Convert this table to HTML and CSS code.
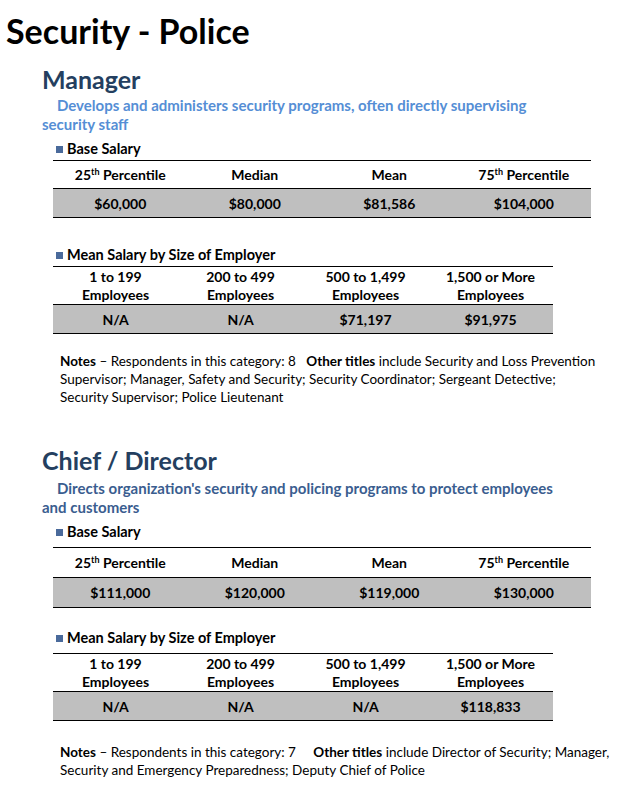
FILE: index.html
```html
<!DOCTYPE html>
<html>
<head>
<meta charset="utf-8">
<link rel="stylesheet" href="styles.css">
</head>
<body>
<h1 class="page-title">Security - Police</h1>

<section class="job">
  <h2 class="job-title">Manager</h2>
  <p class="job-desc light">Develops and administers security programs, often directly supervising security staff</p>
  <h3 class="sub"><span class="sq"></span>Base Salary</h3>
  <table class="tbl base">
    <tr class="hd"><th>25<sup>th</sup> Percentile</th><th>Median</th><th>Mean</th><th>75<sup>th</sup> Percentile</th></tr>
    <tr class="val"><td>$60,000</td><td>$80,000</td><td>$81,586</td><td>$104,000</td></tr>
  </table>
  <h3 class="sub sub2"><span class="sq"></span>Mean Salary by Size of Employer</h3>
  <table class="tbl size">
    <tr class="hd"><th>1 to 199<br>Employees</th><th>200 to 499<br>Employees</th><th>500 to 1,499<br>Employees</th><th>1,500 or More<br>Employees</th></tr>
    <tr class="val"><td>N/A</td><td>N/A</td><td>$71,197</td><td>$91,975</td></tr>
  </table>
  <p class="notes"><b>Notes</b> – Respondents in this category: 8&nbsp;&nbsp; <b>Other titles</b> include Security and Loss Prevention Supervisor; Manager, Safety and Security; Security Coordinator; Sergeant Detective; Security Supervisor; Police Lieutenant</p>
</section>

<section class="job job2">
  <h2 class="job-title">Chief / Director</h2>
  <p class="job-desc dark">Directs organization's security and policing programs to protect employees and customers</p>
  <h3 class="sub"><span class="sq"></span>Base Salary</h3>
  <table class="tbl base">
    <tr class="hd"><th>25<sup>th</sup> Percentile</th><th>Median</th><th>Mean</th><th>75<sup>th</sup> Percentile</th></tr>
    <tr class="val"><td>$111,000</td><td>$120,000</td><td>$119,000</td><td>$130,000</td></tr>
  </table>
  <h3 class="sub sub2"><span class="sq"></span>Mean Salary by Size of Employer</h3>
  <table class="tbl size">
    <tr class="hd"><th>1 to 199<br>Employees</th><th>200 to 499<br>Employees</th><th>500 to 1,499<br>Employees</th><th>1,500 or More<br>Employees</th></tr>
    <tr class="val"><td>N/A</td><td>N/A</td><td>N/A</td><td>$118,833</td></tr>
  </table>
  <p class="notes"><b>Notes</b> – Respondents in this category: 7&nbsp;&nbsp;&nbsp;&nbsp; <b>Other titles</b> include Director of Security; Manager, Security and Emergency Preparedness; Deputy Chief of Police</p>
</section>
</body>
</html>
```
FILE: styles.css
```css
html, body {
  margin: 0;
  padding: 0;
  background: #fff;
}
body {
  font-family: Lato, "Open Sans", sans-serif;
  color: #000;
  width: 629px;
}
.page-title {
  margin: 0;
  padding: 12px 0 0 6px;
  font-size: 34px;
  line-height: 38px;
  font-weight: 700;
}
.job {
  padding-left: 42px;
}
.job-title {
  margin: 14px 0 0 0;
  font-size: 25px;
  line-height: 30px;
  font-weight: 700;
  color: #243f60;
}
.job2 .job-title {
  margin-top: 39px;
}
.job-desc {
  margin: 2px 0 0 0;
  width: 515px;
  font-size: 15px;
  line-height: 19px;
  font-weight: 700;
  text-indent: 15px;
}
.job2 .job-desc { margin-top: 4px; }
.job-desc.light { color: #558ed5; }
.job-desc.dark { color: #3a5d8f; }
.sub {
  margin: 6px 0 0 14px;
  font-size: 14.5px;
  line-height: 18px;
  font-weight: 700;
  display: flex;
  align-items: center;
}
.sub2 { margin-top: 28px; }
.job2 .sub2 { margin-top: 21px; }
.sq {
  width: 7px;
  height: 7px;
  background: #4a6a9b;
  margin-right: 4px;
}
.tbl {
  border-collapse: collapse;
  margin: 2px 0 0 11px;
  table-layout: fixed;
  border-top: 1px solid #000;
  border-bottom: 1px solid #000;
}
.job2 .tbl.base { margin-top: 6px; }
.job2 .tbl.size { margin-top: 6px; }
.tbl.base { width: 538px; }
.tbl.size { width: 500px; }
.tbl th, .tbl td {
  padding: 0;
  text-align: center;
  font-size: 14px;
  font-weight: 700;
}
.tbl .hd th {
  border-bottom: 1px solid #000;
}
.tbl.base .hd th { height: 27px; }
.job2 .tbl.base .hd th { height: 29px; }
.tbl.size .hd th { height: 36px; line-height: 18px; padding-top: 1px; }
.tbl .val td {
  background: #bfbfbf;
  height: 28px;
}
.job2 .tbl.base .val td { height: 29px; }
sup {
  font-size: 9px;
  line-height: 0;
  vertical-align: 5px;
}
.notes {
  margin: 18px 0 0 18px;
  width: 545px;
  font-size: 13.5px;
  line-height: 18px;
}
.job2 .notes { margin-top: 22px; width: 565px; }
```
